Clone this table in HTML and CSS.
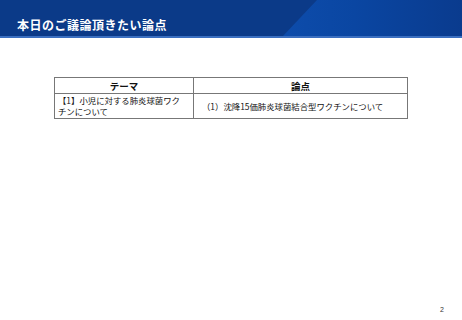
FILE: index.html
```html
<!DOCTYPE html>
<html lang="ja">
<head>
<meta charset="utf-8">
<link rel="stylesheet" href="styles.css">
</head>
<body>
<div class="slide">
  <header class="band">
    <h1 class="title">本日のご議論頂きたい論点</h1>
  </header>
  <main class="content">
    <table class="grid">
      <thead>
        <tr><th class="c1">テーマ</th><th class="c2">論点</th></tr>
      </thead>
      <tbody>
        <tr>
          <td class="c1">【1】小児に対する肺炎球菌ワクチンについて</td>
          <td class="c2">（1）沈降15価肺炎球菌結合型ワクチンについて</td>
        </tr>
      </tbody>
    </table>
  </main>
  <footer class="pageno">2</footer>
</div>
</body>
</html>
```
FILE: styles.css
```css
* { box-sizing: border-box; }
html, body { margin: 0; padding: 0; background: #fff; }
body { font-family: "Noto Sans CJK JP", "Noto Sans", sans-serif; }
.slide { width: 462px; height: 320px; display: flex; flex-direction: column; position: relative; overflow: hidden; }
.band {
  height: 38px;
  flex: none;
  border-bottom: 2px solid #3b6fc0;
  background: #0b3a88;
  position: relative;
  display: flex;
  align-items: center;
  padding: 12px 0 0 17px;
}
.band::before {
  content: "";
  position: absolute;
  top: 0; bottom: 0; right: 0; left: 283px;
  clip-path: polygon(34px 0, 100% 0, 100% 100%, 0 100%);
  background: linear-gradient(to right, #0d4cab 0%, #0a46a2 40%, #0a3b8e 100%);
}
.title {
  position: relative;
  margin: 0;
  color: #fff;
  font-size: 12px;
  font-weight: 700;
  letter-spacing: 0.5px;
}
.content { padding: 39px 0 0 54px; flex: 1; }
.grid {
  border-collapse: collapse;
  width: 354px;
  font-size: 8.4px;
  color: #111;
}
.grid th, .grid td { border: 1px solid #777; }
.grid th {
  height: 16px;
  font-weight: 700;
  font-size: 9.5px;
  text-align: center;
  padding: 0;
}
.grid td { height: 25px; padding: 1px 10px 1px 3px; line-height: 11px; vertical-align: middle; }
.grid .c1 { width: 139px; }
.grid td.c2 { padding-left: 8px; }
.pageno {
  position: absolute;
  right: 18px;
  bottom: 7px;
  font-family: "Liberation Sans", sans-serif;
  font-size: 7px;
  color: #333;
}
```
